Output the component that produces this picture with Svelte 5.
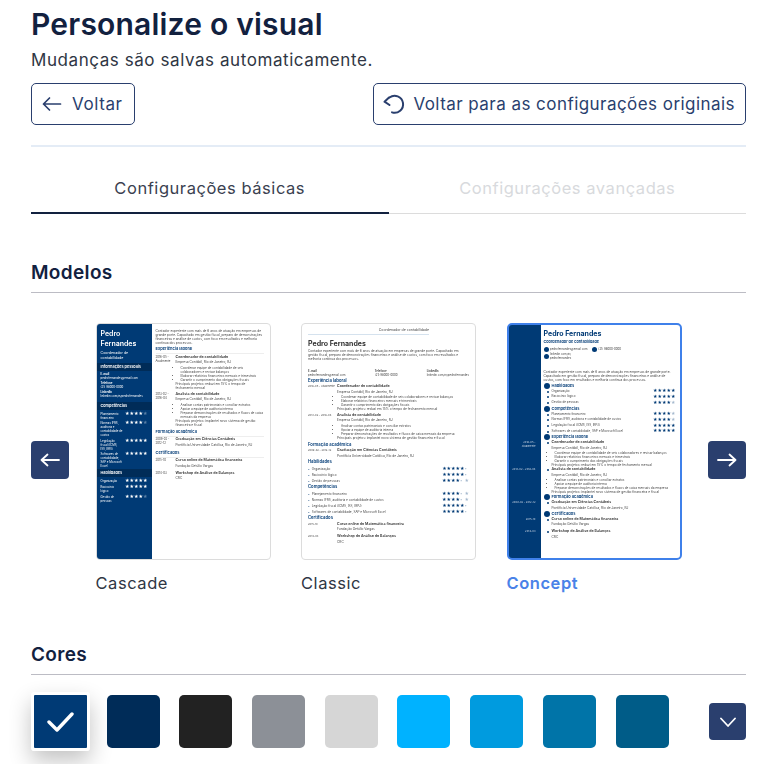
<script lang="ts">
  type Skill = { name: string; stars: number };
  type Job = { date: string; title: string; place: string; bullets: string[]; note: string };
  type Entry = { date: string; title: string; place: string };

  const colors = ['#003a75', '#002c58', '#222222', '#8c9097', '#d6d6d6', '#00b2ff', '#009bdf', '#0074a8', '#005c88'];

  let selectedColor = $state(0);
  let activeTab = $state(0);

  const summary =
    'Contador experiente com mais de 6 anos de atuação em empresas de grande porte. Capacitado em gestão fiscal, preparo de demonstrações financeiras e análise de custos, com foco em resultados e melhoria contínua dos processos.';

  const jobs: Job[] = [
    {
      date: '2016-05 - Atualmente',
      title: 'Coordenador de contabilidade',
      place: 'Empresa Contábil, Rio de Janeiro, RJ',
      bullets: [
        'Coordenar equipe de contabilidade de seis colaboradores e revisar balanços',
        'Elaborar relatórios financeiros mensais e trimestrais',
        'Garantir o cumprimento das obrigações fiscais',
      ],
      note: 'Principais projetos: reduzi em 15% o tempo de fechamento mensal',
    },
    {
      date: '2013-02 - 2016-04',
      title: 'Analista de contabilidade',
      place: 'Empresa Contábil, Rio de Janeiro, RJ',
      bullets: [
        'Analisar contas patrimoniais e conciliar extratos',
        'Apoiar a equipe de auditoria interna',
        'Preparar demonstrações de resultados e fluxos de caixa mensais da empresa',
      ],
      note: 'Principais projetos: implantei novo sistema de gestão financeira e fiscal',
    },
  ];

  const degree: Entry = {
    date: '2009-02 - 2012-12',
    title: 'Graduação em Ciências Contábeis',
    place: 'Pontifícia Universidade Católica, Rio de Janeiro, RJ',
  };

  const certificates: Entry[] = [
    { date: '2015-10', title: 'Curso online de Matemática financeira', place: 'Fundação Getúlio Vargas' },
    { date: '2014-03', title: 'Workshop de Análise de Balanços', place: 'CRC' },
  ];

  const competences: Skill[] = [
    { name: 'Planejamento financeiro', stars: 4 },
    { name: 'Normas IFRS, auditoria e contabilidade de custos', stars: 4 },
    { name: 'Legislação fiscal (ICMS, ISS, IRPJ)', stars: 5 },
    { name: 'Softwares de contabilidade, SAP e Microsoft Excel', stars: 5 },
  ];

  const abilities: Skill[] = [
    { name: 'Organização', stars: 5 },
    { name: 'Raciocínio lógico', stars: 5 },
    { name: 'Gestão de pessoas', stars: 4 },
  ];
</script>

{#snippet stars(count: number)}
  <span class="stars">{'★'.repeat(count)}<span class="stars-off">{'★'.repeat(5 - count)}</span></span>
{/snippet}

<div class="page">
  <h1>Personalize o visual</h1>
  <p class="sub">Mudanças são salvas automaticamente.</p>

  <div class="actions">
    <button type="button" class="outline back">
      <svg viewBox="0 0 20 20" width="20" height="20" fill="none" stroke="currentColor" stroke-width="1.7" stroke-linecap="round" stroke-linejoin="round">
        <path d="M18.5 10H1.5M7.5 4l-6 6 6 6" />
      </svg>
      Voltar
    </button>
    <button type="button" class="outline reset">
      <svg viewBox="0 0 24 24" width="24" height="24" fill="none" stroke="currentColor" stroke-width="2" stroke-linecap="round" stroke-linejoin="round">
        <path d="M6.5 5.5A8.5 8.5 0 1 1 9 20.4" />
        <path d="M6 5.5L1.5 9.7 6.5 13" />
      </svg>
      Voltar para as configurações originais
    </button>
  </div>

  <div class="rule"></div>

  <div class="tabs">
    {#each ['Configurações básicas', 'Configurações avançadas'] as tab, i}
      <button type="button" class="tab" class:active={activeTab === i} disabled={i === 1} onclick={() => (activeTab = i)}>{tab}</button>
    {/each}
  </div>

  <h2 class="models-head">Modelos</h2>

  <div class="carousel">
    <button type="button" class="nav" aria-label="Anterior">
      <svg viewBox="0 0 20 20" width="20" height="20" fill="none" stroke="currentColor" stroke-width="1.8" stroke-linecap="round" stroke-linejoin="round">
        <path d="M19 10H1.5M7.5 4.5L1.5 10l6 5.5" />
      </svg>
    </button>

    <div class="models">
      <div class="model">
        <div class="card cascade">
          <aside>
            <div class="c1-name">Pedro<br />Fernandes</div>
            <div class="c1-role">Coordenador de contabilidade</div>
            <div class="c1-band">Informações pessoais</div>
            <div class="c1-info"><b>E-mail</b>pedrofernandes@email.com</div>
            <div class="c1-info"><b>Telefone</b>(21) 98000-0000</div>
            <div class="c1-info"><b>LinkedIn</b>linkedin.com/in/pedrofernandes</div>
            <div class="c1-band comp">Competências</div>
            {#each competences as s}
              <div class="c1-skill"><span>{s.name}</span>{@render stars(s.stars)}</div>
            {/each}
            <div class="c1-band hab">Habilidades</div>
            {#each abilities as s}
              <div class="c1-skill one"><span>{s.name}</span>{@render stars(s.stars)}</div>
            {/each}
          </aside>
          <div class="c1-main">
            <p class="tiny">{summary}</p>
            <div class="c-head">Experiência laboral</div>
            {#each jobs as job}
              <div class="c1-row">
                <span class="c1-date">{job.date}</span>
                <div>
                  <div class="j-title">{job.title}</div>
                  <div class="tiny j-place">{job.place}</div>
                  <ul>
                    {#each job.bullets as b}<li>{b}</li>{/each}
                  </ul>
                  <div class="tiny">{job.note}</div>
                </div>
              </div>
            {/each}
            <div class="c-head">Formação acadêmica</div>
            <div class="c1-row">
              <span class="c1-date">{degree.date}</span>
              <div>
                <div class="j-title">{degree.title}</div>
                <div class="tiny j-place">{degree.place}</div>
              </div>
            </div>
            <div class="c-head">Certificados</div>
            {#each certificates as c}
              <div class="c1-row">
                <span class="c1-date">{c.date}</span>
                <div>
                  <div class="j-title">{c.title}</div>
                  <div class="tiny j-place">{c.place}</div>
                </div>
              </div>
            {/each}
          </div>
        </div>
        <div class="model-name">Cascade</div>
      </div>

      <div class="model">
        <div class="card classic">
          <div class="c2-top">Coordenador de contabilidade</div>
          <div class="c2-name">Pedro Fernandes</div>
          <p class="tiny">{summary}</p>
          <div class="c2-contact">
            <div><b>E-mail</b>pedrofernandes@email.com</div>
            <div><b>Telefone</b>(21) 98000-0000</div>
            <div><b>LinkedIn</b>linkedin.com/in/pedrofernandes</div>
          </div>
          <div class="c2-head">Experiência laboral</div>
          {#each jobs as job}
            <div class="c2-row">
              <span class="c2-date">{job.date}</span>
              <div>
                <div class="j-title">{job.title}</div>
                <div class="tiny j-place">{job.place}</div>
                <ul class="c2-list">
                  {#each job.bullets as b}<li>{b}</li>{/each}
                </ul>
                <div class="tiny c2-note">{job.note}</div>
              </div>
            </div>
          {/each}
          <div class="c2-head">Formação acadêmica</div>
          <div class="c2-row">
            <span class="c2-date">{degree.date}</span>
            <div>
              <div class="j-title">{degree.title}</div>
              <div class="tiny j-place">{degree.place}</div>
            </div>
          </div>
          <div class="c2-head">Habilidades</div>
          {#each abilities as s}
            <div class="c2-skill"><span>{s.name}</span>{@render stars(s.stars)}</div>
          {/each}
          <div class="c2-head">Competências</div>
          {#each competences as s}
            <div class="c2-skill"><span>{s.name}</span>{@render stars(s.stars)}</div>
          {/each}
          <div class="c2-head">Certificados</div>
          {#each certificates as c}
            <div class="c2-row cert">
              <span class="c2-date">{c.date}</span>
              <div>
                <div class="j-title">{c.title}</div>
                <div class="tiny j-place">{c.place}</div>
              </div>
            </div>
          {/each}
        </div>
        <div class="model-name">Classic</div>
      </div>

      <div class="model selected">
        <div class="card concept">
          <div class="c3-name">Pedro Fernandes</div>
          <div class="c3-role">Coordenador de contabilidade</div>
          <div class="c3-contact first"><i></i>pedrofernandes@email.com <i class="gap"></i>(21) 98000-0000</div>
          <div class="c3-contact"><i></i><span>linkedin.com/in/<br />pedrofernandes</span></div>
          <p class="tiny c3-summary">{summary}</p>

          <div class="c3-head"><i></i>Habilidades</div>
          {#each abilities as s}
            <div class="c3-skill"><span>{s.name}</span>{@render stars(s.stars)}</div>
          {/each}
          <div class="c3-head"><i></i>Competências</div>
          {#each competences as s}
            <div class="c3-skill"><span>{s.name}</span>{@render stars(s.stars)}</div>
          {/each}
          <div class="c3-head"><i></i>Experiência laboral</div>
          {#each jobs as job}
            <div class="c3-row">
              <span class="c3-date">{job.date}</span>
              <div class="c3-body">
                <div class="j-title">{job.title}</div>
                <div class="tiny j-place">{job.place}</div>
                <ul>
                  {#each job.bullets as b}<li>{b}</li>{/each}
                </ul>
                <div class="tiny">{job.note}</div>
              </div>
            </div>
          {/each}
          <div class="c3-head"><i></i>Formação acadêmica</div>
          <div class="c3-row">
            <span class="c3-date">{degree.date}</span>
            <div class="c3-body">
              <div class="j-title">{degree.title}</div>
              <div class="tiny j-place">{degree.place}</div>
            </div>
          </div>
          <div class="c3-head"><i></i>Certificados</div>
          {#each certificates as c}
            <div class="c3-row cert">
              <span class="c3-date">{c.date}</span>
              <div class="c3-body">
                <div class="j-title">{c.title}</div>
                <div class="tiny j-place">{c.place}</div>
              </div>
            </div>
          {/each}
        </div>
        <div class="model-name">Concept</div>
      </div>
    </div>

    <button type="button" class="nav" aria-label="Próximo">
      <svg viewBox="0 0 20 20" width="20" height="20" fill="none" stroke="currentColor" stroke-width="1.8" stroke-linecap="round" stroke-linejoin="round">
        <path d="M1 10h17.5M12.5 4.5l6 5.5-6 5.5" />
      </svg>
    </button>
  </div>

  <h2 class="colors-head">Cores</h2>

  <div class="color-row">
    <div class="swatches">
      {#each colors as color, i}
        <button
          type="button"
          class="swatch"
          class:picked={selectedColor === i}
          style:background={color}
          aria-label={color}
          onclick={() => (selectedColor = i)}
        >
          {#if selectedColor === i}
            <svg viewBox="0 0 27 20" width="27" height="20" fill="none" stroke="#fff" stroke-width="3.4" stroke-linecap="round" stroke-linejoin="round">
              <path d="M2 10l8 8L25 2" />
            </svg>
          {/if}
        </button>
      {/each}
    </div>
    <button type="button" class="nav small" aria-label="Mais cores">
      <svg viewBox="0 0 16 16" width="16" height="16" fill="none" stroke="currentColor" stroke-width="1.8" stroke-linecap="round" stroke-linejoin="round">
        <path d="M1 4.5l7 7.5 7-7.5" />
      </svg>
    </button>
  </div>
</div>

<style>
  :global(body) {
    background: #fff;
  }
  .page {
    box-sizing: border-box;
    width: 759px;
    height: 764px;
    overflow: hidden;
    padding: 6px 13px 0 31px;
    font-family: Inter, 'Open Sans', sans-serif;
    color: #12213f;
  }
  h1 {
    margin: 0;
    font-size: 30px;
    line-height: 36px;
    font-weight: 600;
    letter-spacing: 0.2px;
    color: #12213f;
  }
  .sub {
    margin: 6px 0 0;
    font-size: 17px;
    line-height: 24px;
    letter-spacing: 0.57px;
    color: #2f3644;
  }
  .actions {
    display: flex;
    justify-content: space-between;
    margin-top: 11px;
  }
  .outline {
    display: flex;
    align-items: center;
    height: 42px;
    background: #fff;
    border: 1px solid #2a3f6e;
    border-radius: 5px;
    font: inherit;
    font-size: 17px;
    letter-spacing: 0.42px;
    color: #2a3f6e;
  }
  .back {
    gap: 10px;
    padding: 0 11px 0 10px;
    letter-spacing: 0.6px;
  }
  .reset {
    gap: 6px;
    padding: 0 10px 0 9px;
    letter-spacing: 0.45px;
  }
  .rule {
    height: 2px;
    margin-top: 20px;
    background: #e4ecf6;
  }
  .tabs {
    display: flex;
    margin-top: 18px;
    border-bottom: 1px solid #dcdcdc;
  }
  .tab {
    flex: 1;
    height: 49px;
    margin-bottom: -1px;
    padding: 0 0 2px;
    background: none;
    border: none;
    border-bottom: 2px solid transparent;
    font: inherit;
    font-size: 16.5px;
    letter-spacing: 0.55px;
    color: #d8dadd;
  }
  .tab.active {
    border-bottom-color: #12213f;
    color: #3a4150;
  }
  h2 {
    margin: 0;
    padding-bottom: 7px;
    border-bottom: 1px solid #bcbcc4;
    font-size: 19px;
    line-height: 24px;
    font-weight: 600;
    letter-spacing: 0.35px;
    color: #12213f;
  }
  .models-head {
    margin-top: 47px;
  }
  .colors-head {
    margin-top: 48px;
  }
  .carousel {
    display: flex;
    align-items: center;
    margin-top: 30px;
  }
  .nav {
    display: flex;
    align-items: center;
    justify-content: center;
    flex: none;
    width: 38px;
    height: 38px;
    padding: 0;
    background: #2a3f6e;
    border: none;
    border-radius: 4px;
    color: #fff;
  }
  .carousel .nav {
    margin-top: 2px;
  }
  .nav.small {
    width: 37px;
    height: 37px;
  }
  .models {
    flex: 1;
    display: flex;
    justify-content: center;
    gap: 30.5px;
  }
  .model {
    width: 175px;
  }
  .model-name {
    margin-top: 11px;
    font-size: 16.5px;
    line-height: 24px;
    letter-spacing: 0.55px;
    color: #2f3644;
  }
  .selected .model-name {
    font-weight: 600;
    color: #4a82e8;
  }
  .card {
    box-sizing: border-box;
    height: 237px;
    overflow: hidden;
    background: #fff;
    border: 1px solid #dcdcdc;
    border-radius: 4px;
    font-size: 3.2px;
    line-height: 5px;
    color: #444;
    filter: blur(0.2px);
  }
  .tiny {
    margin: 0;
    font-size: 3.2px;
    line-height: 4px;
    color: #444;
  }
  .j-title {
    font-size: 3.6px;
    line-height: 5px;
    font-weight: 600;
    color: #333;
  }
  .j-place {
    margin-top: 0.5px;
    line-height: 5px;
  }
  ul {
    margin: 0.5px 0 0;
    padding: 0 0 0 5px;
    font-size: 3.1px;
    line-height: 4px;
  }
  .stars {
    flex: none;
    font-size: 4.3px;
    line-height: 4px;
  }
  .stars-off {
    opacity: 0.35;
  }

  /* Cascade */
  .cascade {
    display: flex;
  }
  .cascade aside {
    flex: none;
    width: 55px;
    padding-top: 5px;
    background: #003a75;
    color: #fff;
  }
  .c1-name {
    padding: 0 4px;
    font-size: 7px;
    line-height: 10px;
    font-weight: 600;
  }
  .c1-role {
    padding: 0 14px 0 4px;
    margin-top: 2px;
    font-size: 3.6px;
    line-height: 5px;
  }
  .c1-band {
    margin-top: 2px;
    padding: 0 4px;
    background: #002c58;
    font-size: 3.8px;
    line-height: 8px;
    font-weight: 600;
  }
  .c1-band.comp {
    margin-top: 4px;
  }
  .c1-band.hab {
    margin-top: 0.5px;
  }
  .c1-info {
    padding: 0 4px;
    margin-top: 1px;
    font-size: 2.8px;
    line-height: 4px;
    white-space: nowrap;
    overflow: hidden;
  }
  .c1-info b {
    display: block;
  }
  .c1-skill {
    display: flex;
    justify-content: space-between;
    padding: 0 4px;
    margin-top: 1.5px;
    font-size: 2.8px;
    line-height: 4px;
  }
  .c1-skill span:first-child {
    width: 22px;
  }
  .c1-skill.one {
    margin-top: 2px;
  }
  .c1-main {
    flex: 1;
    min-width: 0;
    padding: 5px 6px 0 4px;
  }
  .c-head {
    margin: 1px 0 0.5px;
    padding-bottom: 1px;
    border-bottom: 1px solid #eeeeee;
    font-size: 4px;
    line-height: 6px;
    font-weight: 600;
    color: #003a75;
  }
  .c1-row {
    display: flex;
    gap: 1px;
    margin-bottom: 2px;
  }
  .c1-date {
    flex: none;
    width: 19px;
    font-size: 2.8px;
    line-height: 4px;
  }

  /* Classic */
  .classic {
    padding: 4px 6px 0 6px;
  }
  .c2-top {
    margin-right: 40px;
    padding-bottom: 1px;
    border-bottom: 1px solid #d5e2ee;
    text-align: right;
    font-size: 3.5px;
    line-height: 5px;
    color: #444;
  }
  .c2-name {
    margin-top: 3px;
    font-size: 7px;
    line-height: 11px;
    font-weight: 700;
    color: #333;
  }
  .c2-contact {
    display: flex;
    justify-content: space-between;
    margin-top: 8px;
    font-size: 2.8px;
    line-height: 4px;
  }
  .c2-contact b {
    display: block;
  }
  .c2-head {
    margin-top: 0.5px;
    font-size: 4.2px;
    line-height: 6.5px;
    font-weight: 600;
    color: #003a75;
  }
  .c2-row {
    display: flex;
  }
  .c2-row.cert {
    margin-bottom: 2px;
  }
  .c2-date {
    flex: none;
    width: 29px;
    font-size: 2.6px;
    line-height: 5px;
  }
  .c2-list {
    padding-left: 4px;
  }
  .c2-note {
    margin-bottom: 1.5px;
  }
  .c2-skill {
    display: flex;
    align-items: center;
    justify-content: space-between;
    height: 6px;
    font-size: 3.1px;
    line-height: 6px;
  }
  .c2-skill span:first-child::before {
    content: '•';
    margin-right: 2px;
    color: #003a75;
  }
  .c2-skill .stars,
  .c3-skill .stars {
    color: #003a75;
  }

  /* Concept */
  .concept {
    padding: 4px 0 0 35px;
    border: 2px solid #3f80ea;
    border-radius: 5px;
    background: linear-gradient(90deg, #003a75 32px, #fff 32px);
  }
  .c3-name {
    font-size: 7px;
    line-height: 10px;
    font-weight: 700;
    color: #003a75;
  }
  .c3-role {
    font-size: 3.8px;
    line-height: 5px;
    font-weight: 600;
    color: #003a75;
  }
  .c3-contact {
    display: flex;
    align-items: center;
    gap: 1.5px;
    font-size: 2.8px;
    line-height: 4px;
  }
  .c3-contact.first {
    margin-top: 3px;
    line-height: 5px;
  }
  .c3-contact i {
    flex: none;
    width: 5px;
    height: 5px;
    border-radius: 50%;
    background: #003a75;
  }
  .c3-contact i.gap {
    margin-left: 3px;
  }
  .c3-summary {
    margin-top: 9.5px;
    padding-right: 6px;
  }
  .c3-head {
    display: flex;
    align-items: center;
    gap: 2px;
    font-size: 4px;
    line-height: 6px;
    font-weight: 600;
    color: #003a75;
  }
  .c3-head i {
    flex: none;
    width: 6px;
    height: 6px;
    border-radius: 50%;
    background: #003a75;
  }
  .c3-summary + .c3-head {
    margin-top: 1px;
  }
  .c3-skill {
    display: flex;
    align-items: center;
    justify-content: space-between;
    height: 5.7px;
    padding: 0 4px 0 8px;
    font-size: 3px;
    line-height: 5.7px;
    position: relative;
  }
  .c3-skill::before,
  .c3-body::before {
    content: '';
    position: absolute;
    left: 3px;
    top: 2px;
    width: 2px;
    height: 2px;
    border-radius: 50%;
    background: #003a75;
  }
  .c3-row {
    display: flex;
    margin-left: -35px;
  }
  .c3-row.cert {
    margin-bottom: 2px;
  }
  .c3-date {
    flex: none;
    box-sizing: border-box;
    width: 32px;
    padding: 0 5px 0 2px;
    text-align: right;
    font-size: 2.6px;
    line-height: 4px;
    color: #cfd9e6;
  }
  .c3-body {
    flex: 1;
    position: relative;
    padding: 0 6px 0 11px;
  }
  .c3-body::before {
    left: 6px;
  }
  .c3-body ul {
    padding-left: 3px;
  }

  /* Cores */
  .color-row {
    display: flex;
    align-items: center;
    justify-content: space-between;
    margin-top: 20px;
  }
  .swatches {
    display: flex;
    gap: 19.7px;
    padding-left: 3px;
  }
  .swatch {
    display: flex;
    align-items: center;
    justify-content: center;
    width: 53px;
    height: 53px;
    padding: 0;
    border: none;
    border-radius: 5px;
  }
  .swatch.picked {
    border-radius: 1px;
    box-shadow: 0 0 0 3px #fff, 0 10px 22px 3px rgba(0, 0, 0, 0.24);
  }
</style>
